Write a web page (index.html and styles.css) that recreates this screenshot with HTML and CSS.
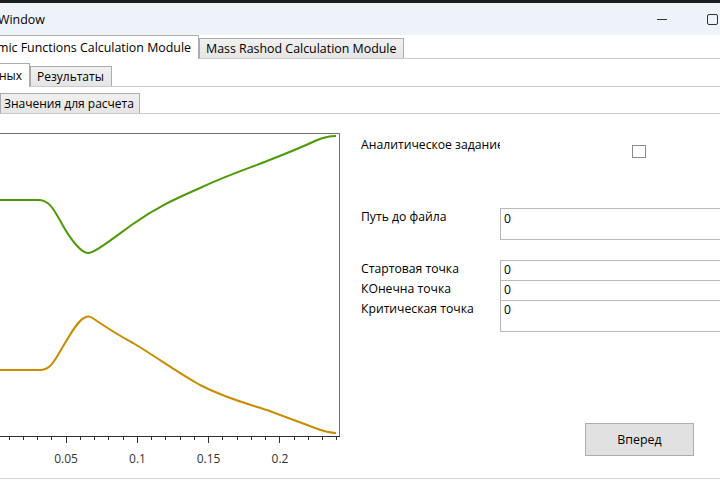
FILE: index.html
```html
<!DOCTYPE html>
<html lang="ru">
<head>
    <meta charset="UTF-8">
    <meta name="viewport" content="width=device-width, initial-scale=1.0">
    <title>MainWindow</title>
    <link rel="stylesheet" href="styles.css">
</head>
<body>
    <div class="app">
        <div class="taskbar"></div>
        <div class="titlebar">
            <span class="title">Window</span>
            <div class="controls">
                <div class="caption-btn"><span class="glyph-min"></span></div>
                <div class="caption-btn"><span class="glyph-max"></span></div>
                <div class="caption-btn"></div>
            </div>
        </div>

        <div class="window">
            <div class="tabstrip">
                <div class="tab active cut-1">Dynamic Functions Calculation Module</div>
                <div class="tab">Mass Rashod Calculation Module</div>
            </div>
            <div class="tabstrip second">
                <div class="tab active cut-2">Ввод данных</div>
                <div class="tab">Результаты</div>
            </div>
            <div class="tabstrip third">
                <div class="tab first">Значения для расчета</div>
            </div>

            <div class="content">
                <svg class="chart" width="340" height="364" viewBox="0 114 340 364">
                    <!-- plot area border -->
                    <path d="M-10 133.5 H339.5 V436.5" fill="none" stroke="#707070" stroke-width="1"/>
                    <path d="M0 436.5 H340" stroke="#303030" stroke-width="1"/>
                    <!-- minor ticks -->
                    <path d="M9.5 436 v4 M23.5 436 v4 M37.5 436 v4 M51.5 436 v4 M80.5 436 v4 M94.5 436 v4 M108.5 436 v4 M123.5 436 v4 M151.5 436 v4 M165.5 436 v4 M180.5 436 v4 M194.5 436 v4 M222.5 436 v4 M237.5 436 v4 M251.5 436 v4 M265.5 436 v4 M294.5 436 v4 M308.5 436 v4 M322.5 436 v4 M336.5 436 v4" stroke="#303030" stroke-width="1"/>
                    <!-- major ticks -->
                    <path d="M66.5 436 v7 M137.5 436 v7 M208.5 436 v7 M279.5 436 v7" stroke="#303030" stroke-width="1"/>
                    <text class="axis-label" x="66" y="463">0.05</text>
                    <text class="axis-label" x="137.5" y="463">0.1</text>
                    <text class="axis-label" x="208.5" y="463">0.15</text>
                    <text class="axis-label" x="280" y="463">0.2</text>
                    <!-- series -->
                    <path d="M-10 200 H38 C50 200 54 210 62 224 C72 242 82 253 88 253 C94 253 104 245 133 224 C160 205 180 197 200 188 C230 174 250 168 267 161 C285 154 300 148 315 141 C324 137 330 136 336 136" fill="none" stroke="#4e9a06" stroke-width="2" stroke-linejoin="round"/>
                    <path d="M-10 370 H40 C48 370 52 365 58 355 C66 342 76 322 84 318 C88 316 90 316 94 319 C110 330 120 336 133 343 C155 356 175 371 200 385 C225 398 245 403 267 410 C285 417 300 422 315 428 C323 431 330 433 336 433" fill="none" stroke="#c88d00" stroke-width="2" stroke-linejoin="round"/>
                </svg>

                <div class="form">
                    <div class="row analytic">
                        <div class="label">Аналитическое задание</div>
                        <div class="check"></div>
                    </div>
                    <div class="row path">
                        <div class="label">Путь до файла</div>
                        <div class="field tall">0</div>
                    </div>
                    <div class="points">
                        <div class="row">
                            <div class="label">Стартовая точка</div>
                            <div class="field">0</div>
                        </div>
                        <div class="row joined">
                            <div class="label">КОнечна точка</div>
                            <div class="field">0</div>
                        </div>
                        <div class="row joined">
                            <div class="label">Критическая точка</div>
                            <div class="field tall">0</div>
                        </div>
                    </div>
                    <button class="next">Вперед</button>
                </div>
            </div>
        </div>
    </div>
</body>
</html>
```

FILE: styles.css
```css
* {
    box-sizing: border-box;
}

body {
    margin: 0;
    overflow: hidden;
    font-family: "Open Sans", "Segoe UI", sans-serif;
    font-size: 12.4px;
    color: #000;
    background-color: #fff;
}

.app {
    width: 789px;
    height: 480px;
}

.taskbar {
    height: 3px;
    background-color: #1c1c1c;
}

.titlebar {
    height: 32px;
    background-color: #eef2f9;
    display: flex;
    align-items: center;
}

.title {
    margin-left: -2px;
}

.controls {
    margin-left: auto;
    display: flex;
}

.caption-btn {
    width: 51px;
    height: 32px;
    display: flex;
    align-items: center;
    justify-content: center;
}

.glyph-min {
    width: 10px;
    height: 1px;
    background-color: #333;
}

.glyph-max {
    width: 11px;
    height: 11px;
    border: 1px solid #333;
    border-radius: 2px;
}

/* tab strips */
.tabstrip {
    display: flex;
    align-items: flex-end;
    height: 24px;
    border-bottom: 1px solid #cbcbcb;
}

.tabstrip.second {
    margin-top: 4px;
    font-size: 12px;
}

.tabstrip.third {
    margin-top: 3px;
    font-size: 12px;
}

.tab {
    height: 20px;
    padding: 0 7px 0 6px;
    border: 1px solid #acacac;
    border-bottom: none;
    background: linear-gradient(#f0f0f0, #e5e5e5);
    display: flex;
    align-items: center;
    white-space: nowrap;
}

.tab.active {
    height: 24px;
    margin-bottom: -1px;
    background: #fff;
}

.tab.cut-1,
.tab.cut-2 {
    justify-content: flex-end;
    overflow: hidden;
    border-left: none;
}

.tab.cut-1 {
    width: 199px;
}

.tab.cut-2 {
    width: 30px;
}

.tab.first {
    padding: 0 5px 0 3px;
}

/* content */
.content {
    display: flex;
    height: 365px;
    border-bottom: 1px solid #d5d5d5;
}

.chart {
    flex: none;
    display: block;
}

.axis-label {
    font-family: "Open Sans", "Segoe UI", sans-serif;
    font-size: 12px;
    fill: #333;
    text-anchor: middle;
}

.form {
    margin-left: 21px;
    display: flex;
    flex-direction: column;
    align-items: flex-start;
    font-size: 12.2px;
}

.row {
    display: flex;
}

.label {
    width: 139px;
    flex: none;
    overflow: hidden;
    white-space: nowrap;
    line-height: 16px;
    padding-top: 1px;
}

.analytic {
    margin-top: 22px;
}

.check {
    width: 14px;
    height: 13px;
    margin: 9px 0 0 132px;
    border: 1px solid #8c8c8c;
    background-color: #fff;
}

.path {
    margin-top: 50px;
}

.points {
    margin-top: 20px;
}

.row.joined {
    margin-top: -1px;
}

.field {
    width: 260px;
    height: 21px;
    padding: 1px 3px;
    border: 1px solid #b9b9b9;
    line-height: 16px;
}

.field.tall {
    height: 32px;
}

.path .field {
    padding-top: 2px;
}

.next {
    margin: 91px 0 0 224px;
    width: 109px;
    height: 33px;
    border: 1px solid #adadad;
    background-color: #e1e1e1;
    font-family: "Open Sans", "Segoe UI", sans-serif;
    font-size: 12.4px;
    color: #000;
    padding: 0;
}
```
